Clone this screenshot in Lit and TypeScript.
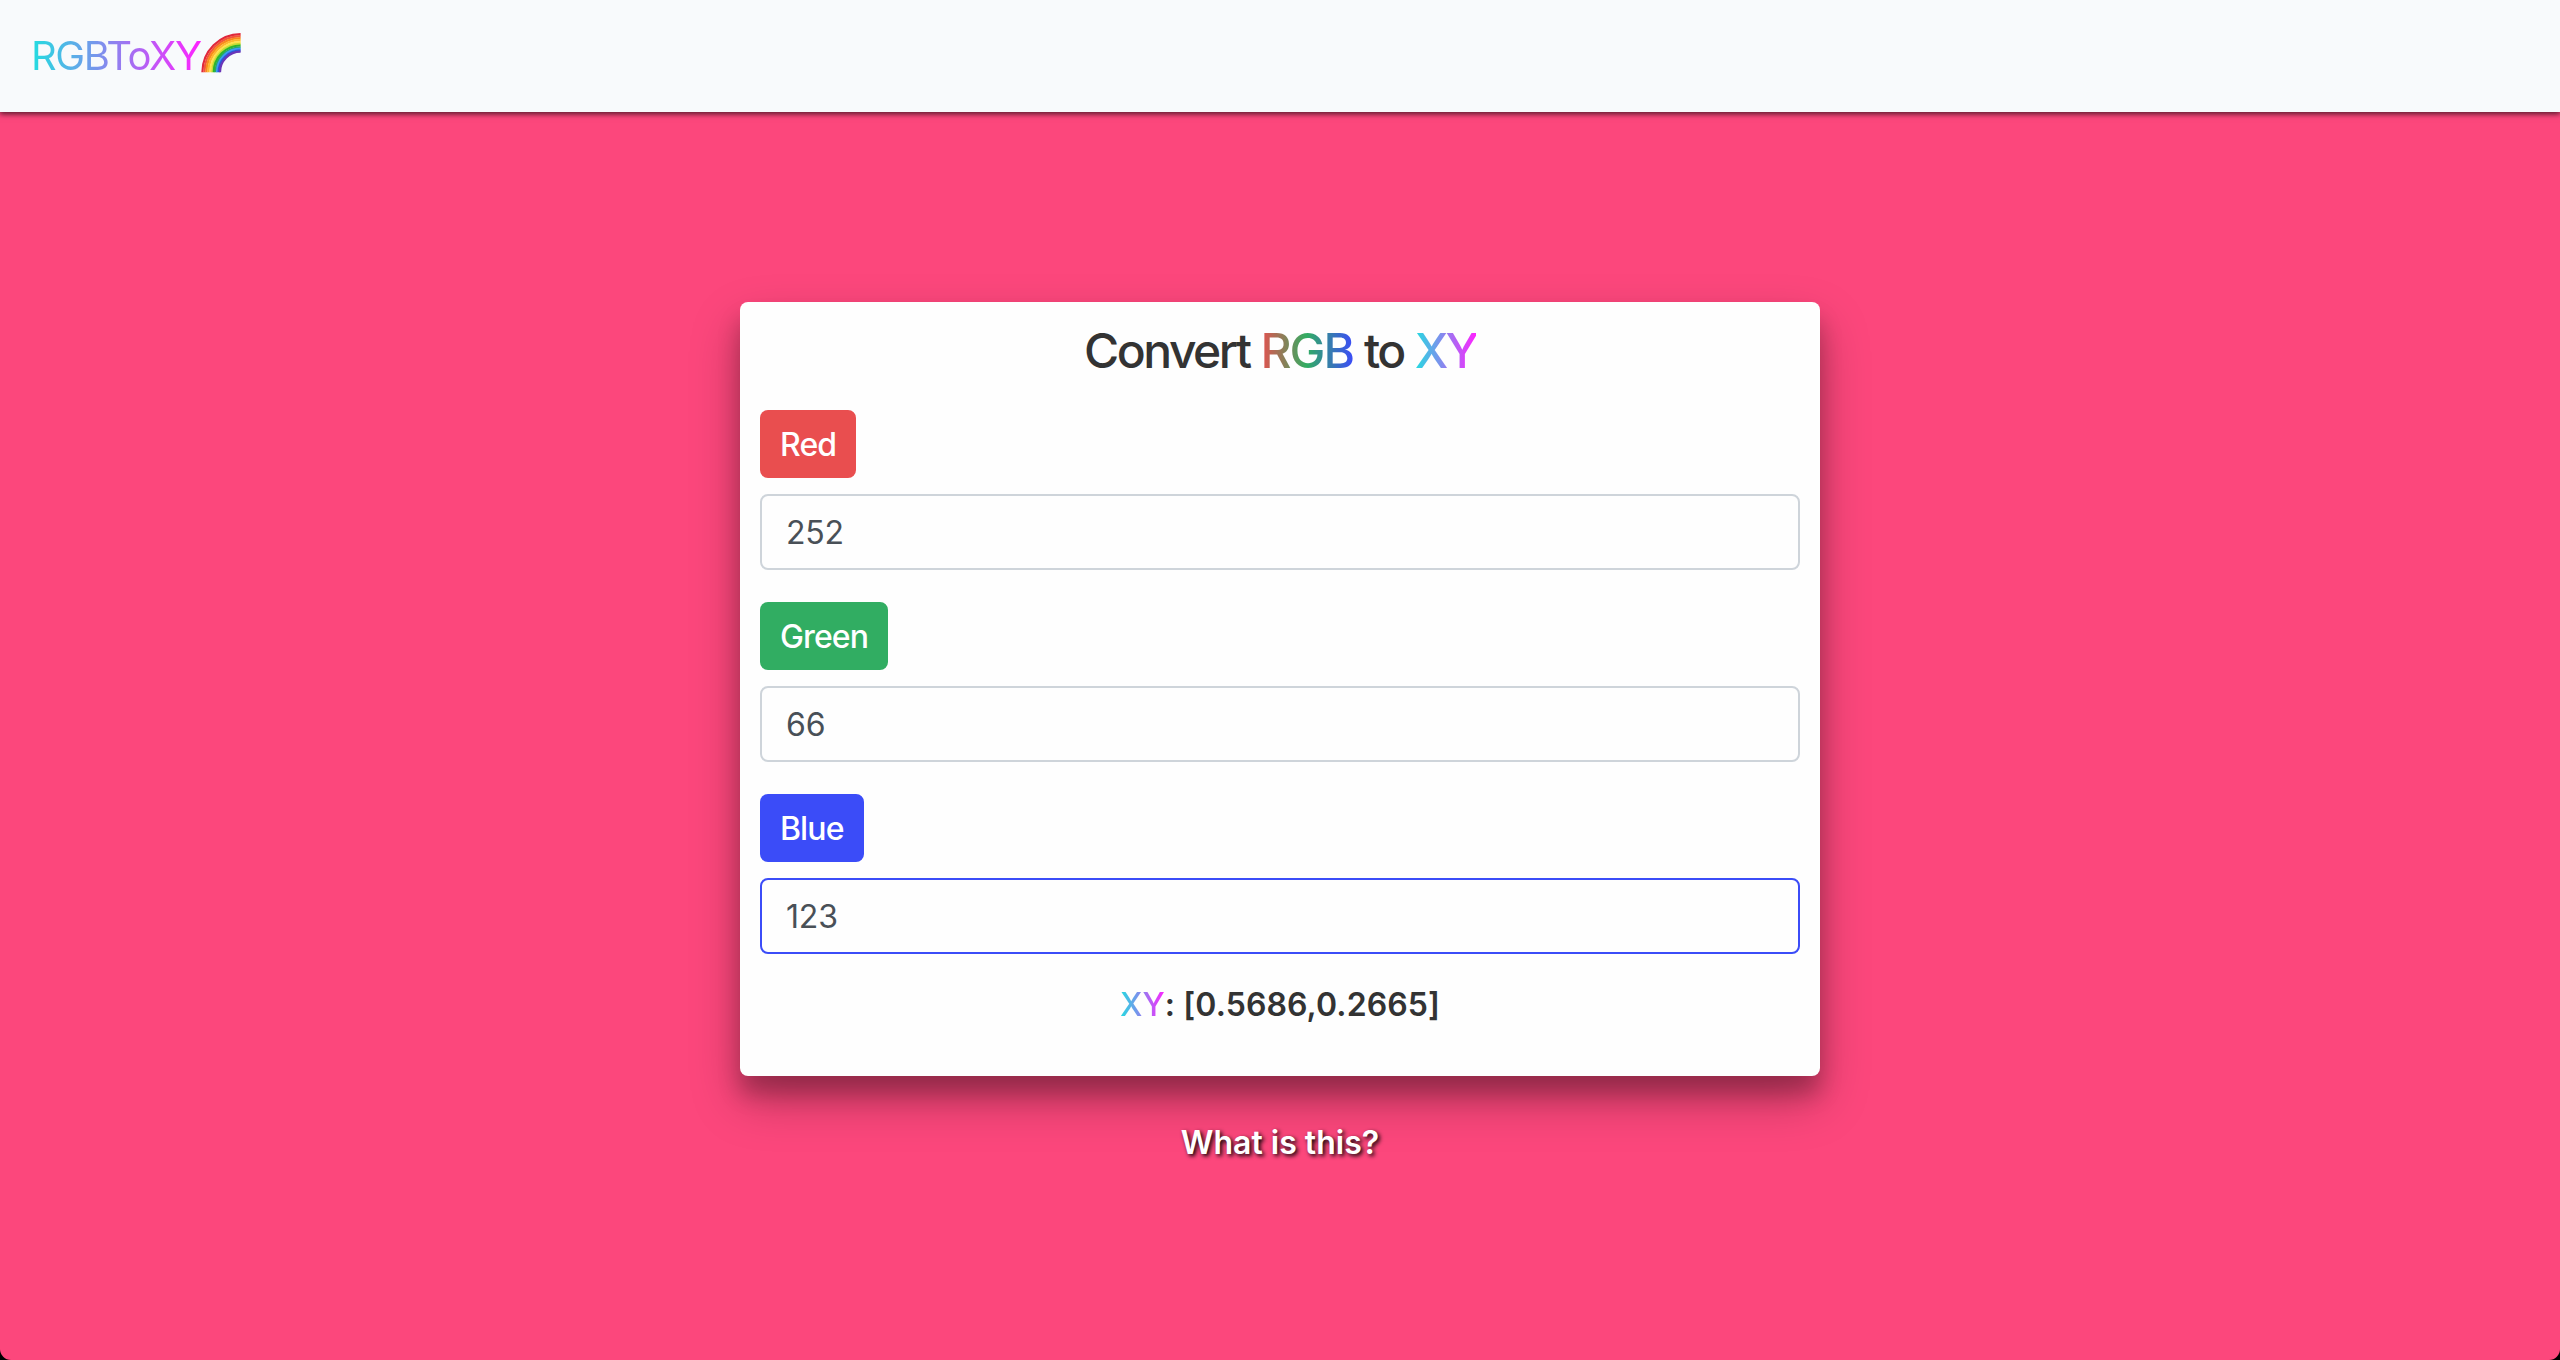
import { LitElement, html, css, svg } from 'lit';
import { customElement, property, state } from 'lit/decorators.js';
import { classMap } from 'lit/directives/class-map.js';

const BANDS = [
  { r: 38.2, color: '#e0283c' },
  { r: 36.2, color: '#f2553a' },
  { r: 34.2, color: '#f98a1c' },
  { r: 32.2, color: '#fdb72c' },
  { r: 30.2, color: '#ffe14a' },
  { r: 28.4, color: '#c5dc35' },
  { r: 26.8, color: '#2db52c' },
  { r: 25.0, color: '#27a866' },
  { r: 23.6, color: '#3a9cf5' },
  { r: 22.0, color: '#2a58d8' },
  { r: 20.6, color: '#6a35b8' },
];

@customElement('rainbow-icon')
export class RainbowIcon extends LitElement {
  static styles = css`
    :host {
      display: block;
      width: 40px;
      height: 40px;
    }

    svg {
      display: block;
    }
  `;

  render() {
    return html`
      <svg width="40" height="40" viewBox="0 0 40 40" fill="none">
        ${BANDS.map(
          (b) => svg`<path d="M${39.6 - b.r} 39.3A${b.r} ${b.r} 0 0 1 39.6 ${39.3 - b.r}" stroke=${b.color} stroke-width="2.2" />`
        )}
      </svg>
    `;
  }
}

@customElement('nav-bar')
export class NavBar extends LitElement {
  static styles = css`
    :host {
      display: flex;
      align-items: center;
      height: 112px;
      padding: 0 31px;
      box-sizing: border-box;
      background: #f8fafc;
      box-shadow: 0 2px 6px rgba(0, 0, 0, 0.5), 0 2px 4px rgba(0, 0, 0, 0.24);
    }

    .brand {
      font-size: 40px;
      line-height: 48px;
      letter-spacing: -1.4px;
      color: transparent;
      background: linear-gradient(to right, #22dde0, #ff22ff);
      -webkit-background-clip: text;
      background-clip: text;
    }

    rainbow-icon {
      margin-bottom: 6px;
    }
  `;

  render() {
    return html`
      <span class="brand">RGBToXY</span>
      <rainbow-icon></rainbow-icon>
    `;
  }
}

@customElement('color-field')
export class ColorField extends LitElement {
  static styles = css`
    :host {
      display: flex;
      flex-direction: column;
      align-items: flex-start;
      gap: 16px;
    }

    .label {
      height: 68px;
      padding: 0 20px;
      border-radius: 8px;
      box-sizing: border-box;
      color: #fff;
      font-size: 32px;
      font-weight: 500;
      line-height: 70px;
      letter-spacing: -0.9px;
    }

    .red {
      background: #e94e4f;
    }

    .green {
      background: #31ad62;
    }

    .blue {
      background: #3b4cf8;
    }

    input {
      width: 100%;
      height: 76px;
      padding: 0 24px;
      box-sizing: border-box;
      border: 2px solid #ced4da;
      border-radius: 8px;
      outline: none;
      background: #fefefe;
      color: #495057;
      font-family: inherit;
      font-size: 32px;
      letter-spacing: -0.2px;
    }

    input.active {
      border-color: #3b4cf8;
    }
  `;

  @property() name = '';
  @property() value = '';
  @property({ type: Boolean }) active = false;

  render() {
    return html`
      <span class="label ${this.name.toLowerCase()}">${this.name}</span>
      <input class=${classMap({ active: this.active })} .value=${this.value} />
    `;
  }
}

@customElement('app-root')
export class AppRoot extends LitElement {
  static styles = css`
    :host {
      display: block;
      height: 1360px;
      background: #000;
      font-family: Inter, "Liberation Sans", sans-serif;
    }

    .page {
      height: 100%;
      overflow: hidden;
      border-radius: 0 0 11px 11px;
      background: #fc477c;
    }

    .content {
      display: flex;
      flex-direction: column;
      align-items: center;
      padding-top: 190px;
    }

    .card {
      display: flex;
      flex-direction: column;
      width: 1080px;
      height: 774px;
      padding: 20px;
      box-sizing: border-box;
      border-radius: 8px;
      background: #fefefe;
      color: #333;
      box-shadow: 0 24px 50px rgba(0, 0, 0, 0.28), 0 18px 22px rgba(0, 0, 0, 0.22);
    }

    h1 {
      margin: 0 0 30px;
      text-align: center;
      font-size: 48px;
      font-weight: 500;
      line-height: 58px;
      letter-spacing: -2.5px;
      word-spacing: 0.7px;
    }

    .fields {
      display: flex;
      flex-direction: column;
      gap: 32px;
    }

    .rgb,
    .xy {
      color: transparent;
      -webkit-background-clip: text;
      background-clip: text;
    }

    .rgb {
      letter-spacing: -2px;
      background-image: linear-gradient(to right, #e94e4f, #31ad62, #3b4cf8);
    }

    .xy {
      background-image: linear-gradient(to right, #22dde0, #ff22ff);
    }

    h1 .xy {
      letter-spacing: -3px;
    }

    .result {
      margin: 31px 0 0;
      text-align: center;
      font-size: 32px;
      font-weight: 600;
      line-height: 40px;
      letter-spacing: 0.1px;
    }

    .result .xy {
      font-weight: 500;
    }

    .about {
      margin-top: 47px;
      color: #fff;
      font-size: 32px;
      font-weight: 600;
      line-height: 40px;
      text-shadow: 2px 2px 4px #000;
    }
  `;

  @state() red = '252';
  @state() green = '66';
  @state() blue = '123';
  @state() xy = [0.5686, 0.2665];

  render() {
    return html`
      <div class="page">
        <nav-bar></nav-bar>
        <div class="content">
          <div class="card">
            <h1>Convert <span class="rgb">RGB</span> to <span class="xy">XY</span></h1>
            <div class="fields">
              <color-field name="Red" .value=${this.red}></color-field>
              <color-field name="Green" .value=${this.green}></color-field>
              <color-field name="Blue" .value=${this.blue} active></color-field>
            </div>
            <p class="result"><span class="xy">XY</span>: [${this.xy.join(',')}]</p>
          </div>
          <span class="about">What is this?</span>
        </div>
      </div>
    `;
  }
}
